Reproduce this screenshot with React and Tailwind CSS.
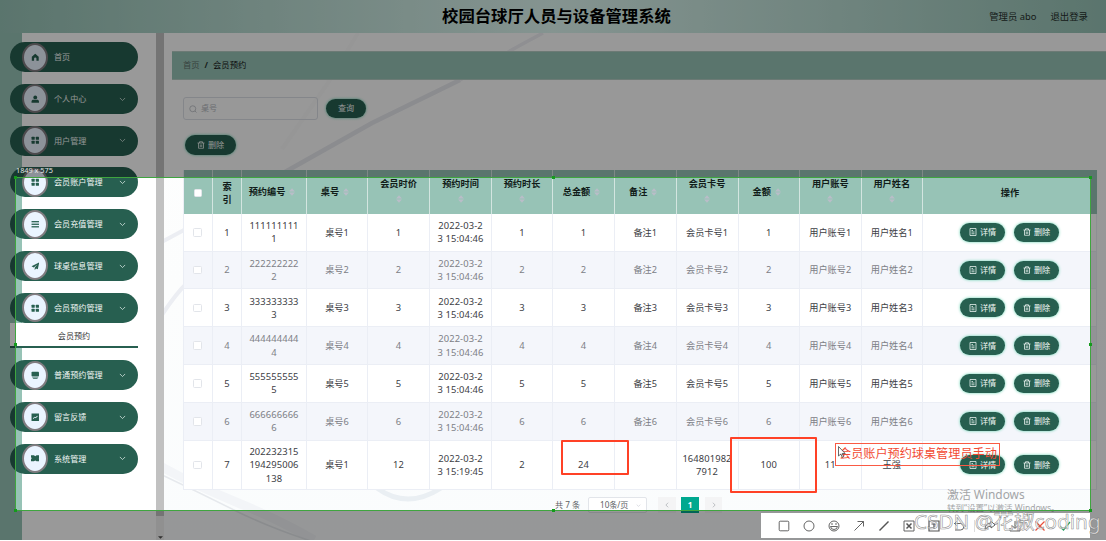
import React from "react";

const COLS =
  "grid grid-cols-[29px_29px_65px_61px_62px_62px_61px_62px_61.5px_62px_61.5px_61.5px_61.5px_1fr]";

const GLYPHS = {
  home: <path d="M8 1.5 1.5 7v7.5h4.3v-4a2.2 2.2 0 0 1 4.4 0v4h4.3V7z" />,
  user: (
    <>
      <circle cx="8" cy="4.6" r="3.6" />
      <path d="M1 14.5V12c0-2 1.5-3 3.5-3h7c2 0 3.5 1 3.5 3v2.5z" />
    </>
  ),
  grid: (
    <>
      <rect x="1" y="1.5" width="6" height="5.5" rx="1" />
      <rect x="9" y="1.5" width="6" height="5.5" rx="1" />
      <rect x="1" y="9" width="6" height="5.5" rx="1" />
      <rect x="9" y="9" width="6" height="5.5" rx="1" />
    </>
  ),
  list: (
    <>
      <rect x="1" y="2" width="14" height="2.4" />
      <rect x="1" y="6.8" width="14" height="2.4" />
      <rect x="1" y="11.6" width="14" height="2.4" />
    </>
  ),
  send: <path d="M15.5.8 1 8.2l4.2 2L12 4.8 7 11v4.2l2.4-3 3.4 1.6z" />,
  board: (
    <>
      <rect x="1" y="1.5" width="14" height="9" rx="1.5" />
      <path d="M2 12h12l-2.5 2.8h-7z" />
    </>
  ),
  chart: (
    <path
      fillRule="evenodd"
      d="M1 1h14v14H1zM3.5 10l1 1.2 2.8-2.6 1.5 1.2L12.8 6l-1-1-3.2 3-1.4-1.1z"
    />
  ),
  ticket: (
    <path d="M0 2.5h5.500L8 4l2.500-1.500H16v3.700a2 2 0 0 0 0 3.600v3.700h-5.500L8 12l-2.500 1.500H0V9.800a2 2 0 0 0 0-3.600z" />
  ),
};

const MENU_TOP = [
  ["home", "首页"],
  ["user", "个人中心"],
  ["grid", "用户管理"],
  ["grid", "会员账户管理"],
  ["list", "会员充值管理"],
  ["send", "球桌信息管理"],
  ["grid", "会员预约管理"],
];
const MENU_BOTTOM = [
  ["board", "普通预约管理"],
  ["chart", "留言反馈"],
  ["ticket", "系统管理"],
];

const HEADERS = [
  "预约编号", "桌号", "会员时价", "预约时间", "预约时长", "总金额",
  "备注", "会员卡号", "金额", "用户账号", "用户姓名",
];
const WRAPPED = ["会员时价", "预约时间", "预约时长", "会员卡号", "用户账号", "用户姓名"];

const ROWS = [1, 2, 3, 4, 5, 6].map((n) => [
  `${n}`,
  [String(n).repeat(9), `${n}`],
  `桌号${n}`,
  `${n}`,
  ["2022-03-2", "3 15:04:46"],
  `${n}`,
  `${n}`,
  `备注${n}`,
  `会员卡号${n}`,
  `${n}`,
  `用户账号${n}`,
  `用户姓名${n}`,
]);
ROWS.push([
  "7",
  ["202232315", "194295006", "138"],
  "桌号1",
  "12",
  ["2022-03-2", "3 15:19:45"],
  "2",
  "24",
  "",
  ["164801982", "7912"],
  "100",
  "11",
  "王强",
]);

function Chevron({ className, d = "M1 1l3 3 3-3", box = "0 0 8 5" }) {
  return (
    <svg className={className} viewBox={box} fill="none" stroke="currentColor" strokeWidth="0.9">
      <path d={d} />
    </svg>
  );
}

function MenuItem({ icon, label }) {
  return (
    <div className="flex h-[30px] w-[128px] shrink-0 items-center rounded-full bg-[#275f50] pl-[12px] pr-[12px] text-white">
      <span className="flex h-[29px] w-[26px] items-center justify-center rounded-[50%] border-2 border-[#807c80] bg-[#eaf4ff]">
        <svg className="h-[8.500px] w-[8.500px]" viewBox="0 0 16 16" fill="#275f50">
          {GLYPHS[icon]}
        </svg>
      </span>
      <span className="ml-[6px] flex-1 whitespace-nowrap text-[8.1px] leading-none text-[#f2f8f6]">{label}</span>
      {icon !== "home" && <Chevron className="h-[4.500px] w-[7px] text-[#d5e5e0]" />}
    </div>
  );
}

function Trash() {
  return (
    <svg className="h-[8px] w-[8px]" viewBox="0 0 16 16" fill="none" stroke="currentColor" strokeWidth="1.5">
      <path d="M1 4h14M5 4V1.500h6V4M3 4v10.500h10V4M6.500 7v5M9.500 7v5" />
    </svg>
  );
}

function Doc() {
  return (
    <svg className="h-[8px] w-[8px]" viewBox="0 0 16 16" fill="none" stroke="currentColor" strokeWidth="1.5">
      <path d="M2 1h12v14H2zM5 5h3M5 8h6M5 11.500h6" />
    </svg>
  );
}

function Pill({ className, children }) {
  return (
    <span
      className={`flex items-center justify-center gap-[3px] whitespace-nowrap rounded-full bg-[#275f50] text-[8.1px] leading-none text-[#f2f8f6] shadow-[0_0_3px_#5fcfac] ${className}`}
    >
      {children}
    </span>
  );
}

function Sort() {
  return (
    <svg className="h-[8px] w-[6px] shrink-0" viewBox="0 0 6 8" fill="#b9bdc8">
      <path d="M3 0.300 5.900 3.500H0.100zM3 7.700 0.100 4.500h5.800z" />
    </svg>
  );
}

function Check({ className = "" }) {
  return <span className={`block h-[8.500px] w-[8.500px] rounded-[1.5px] border border-[#e2e5ea] bg-white ${className}`} />;
}

function Marble() {
  return (
    <svg className="absolute inset-0 h-full w-full" viewBox="164 33 942 507" preserveAspectRatio="none" fill="none">
      <defs>
        <linearGradient id="wash" x1="0" y1="0" x2="0" y2="1">
          <stop offset="0" stopColor="#fefefe" />
          <stop offset="0.500" stopColor="#fcfdfd" />
          <stop offset="1" stopColor="#fafcfd" />
        </linearGradient>
      </defs>
      <rect x="164" y="33" width="942" height="507" fill="url(#wash)" />
      <path d="M543 33Q505 53 460 80" stroke="#eeeff3" strokeWidth="3.500" />
      <path d="M460 80L372 123 285 172" stroke="#e8e9ee" strokeWidth="4.500" />
      <path d="M358 33l-30 50-46 66" stroke="#fafafb" strokeWidth="4" />
      <path d="M160 243l24-13M160 318q14-22 26-34" stroke="#eceef3" strokeWidth="4" />
      <path d="M160 466q32 18 76 36t78 38" stroke="#f3f5f8" strokeWidth="9" />
      <path d="M160 474q38 18 74 36t80 32" stroke="#e6e9ed" strokeWidth="1.500" />
      <path d="M377 488q30 22 64 0" stroke="#eaeff3" strokeWidth="5" />
    </svg>
  );
}

function Cell({ value }) {
  const lines = Array.isArray(value) ? value : [value];
  const numeric = /^[\d\s:-]*$/.test(lines[0]);
  return (
    <div
      className={`flex flex-col items-center justify-center whitespace-nowrap border-r border-[#ebeef5] leading-[13.3px] ${
        numeric ? "text-[9.4px] tracking-[0.100px]" : "text-[9.2px]"
      }`}
    >
      {lines.map((l, i) => (
        <span key={i}>{l}</span>
      ))}
    </div>
  );
}

function Table() {
  return (
    <div className="w-[914px] border-l border-[#ebeef5]">
      <div className={`${COLS} h-[43.600px] bg-[#97c3b6] text-[9.2px] font-bold leading-[13.300px] text-[#111c19]`}>
        <div className="flex items-center justify-center border-r border-[#d3e5e0] pt-[2px]">
          <Check />
        </div>
        <div className="flex flex-col items-center justify-center border-r border-[#d3e5e0] pt-[2px]">
          <span>索</span>
          <span>引</span>
        </div>
        {HEADERS.map((h) => (
          <div
            key={h}
            className={`flex items-center justify-center whitespace-nowrap border-r border-[#d3e5e0] ${
              WRAPPED.includes(h) ? "flex-col gap-[4px] pb-[4px]" : "gap-[4px] pb-[1px] pr-[4px]"
            }`}
          >
            <span>{h}</span>
            <Sort />
          </div>
        ))}
        <div className="flex items-center justify-center pt-[2px]">操作</div>
      </div>
      {ROWS.map((row, r) => (
        <div
          key={r}
          className={`${COLS} border-b border-[#ebeef5] ${r === 6 ? "h-[49.500px]" : "h-[37.800px]"} ${
            r % 2 ? "bg-[#f4f6fb] text-[#7d8086]" : "bg-white text-[#3d4045]"
          }`}
        >
          <div className="flex items-center justify-center border-r border-[#ebeef5] pr-[1px]">
            <Check />
          </div>
          {row.map((v, i) => (
            <Cell key={i} value={v} />
          ))}
          <div className="flex items-center justify-center gap-[9px] border-r border-[#ebeef5]">
            <Pill className="h-[19px] w-[45px]">
              <Doc />
              详情
            </Pill>
            <Pill className="h-[19px] w-[45px]">
              <Trash />
              删除
            </Pill>
          </div>
        </div>
      ))}
    </div>
  );
}

function Selection() {
  const dots = [
    "left-[-2px] top-[-2px]",
    "left-[536px] top-[-2px]",
    "right-[-2px] top-[-2px]",
    "left-[-2px] top-[165px]",
    "right-[-2px] top-[165px]",
    "left-[-2px] bottom-[-2px]",
    "left-[536px] bottom-[-2px]",
    "right-[-2px] bottom-[-2px]",
  ];
  return (
    <div className="absolute left-[15px] top-[177px] h-[334px] w-[1076px] border border-[#3fa53f] shadow-[0_0_0_1200px_rgba(0,0,0,0.4)]">
      {dots.map((d) => (
        <i key={d} className={`absolute h-[3px] w-[3px] bg-[#149a1c] ${d}`} />
      ))}
    </div>
  );
}

function Toolbar() {
  const props = { className: "h-[12px] w-[12px]", viewBox: "0 0 12 12", fill: "none", stroke: "#555", strokeWidth: 0.9 };
  return (
    <div className="absolute left-[761px] top-[513px] flex h-[25px] w-[329px] items-center gap-[13px] bg-white pl-[16.500px]">
      <svg {...props}><rect x="1.200" y="1.200" width="9.600" height="9.600" rx="1" /></svg>
      <svg {...props}><circle cx="6" cy="6" r="5" /></svg>
      <svg {...props}><circle cx="6" cy="6" r="5" /><path d="M2.500 6.500h7q-.5 3-3.500 3t-3.500-3zM4 3v2M8 3v2" /></svg>
      <svg {...props}><path d="M1.500 10.500l9-9M4.500 1.500h6v5" /></svg>
      <svg {...props}><path d="M1.500 10.500l9-9" strokeWidth="1.400" /></svg>
      <svg {...props}><path d="M1 1h10v10H1z" /><path d="M3.500 3.500l5 5M8.500 3.500l-5 5" strokeWidth="1.500" /></svg>
      <svg {...props}><path d="M1 1h10v10H1zM3.500 4h5M6 4v5" strokeWidth="1.200" /></svg>
      <svg {...props}><path d="M4 1L1.500 3.500 4 6M1.500 3.500h6a3.200 3.200 0 0 1 0 6.500H2" /></svg>
      <span className="-mx-[4px] h-[12px] w-px bg-[#ddd]" />
      <svg {...props}><path d="M1 10q0-7 6-7V1l4 4-4 3V6Q3 6 1 10z" /></svg>
      <svg {...props}><path d="M6 1v7M3 5.500l3 3 3-3M1 8v3h10V8" /></svg>
      <svg {...props} stroke="#e8503c"><path d="M1.500 1.500l9 9M10.500 1.500l-9 9" strokeWidth="1.200" /></svg>
      <svg {...props} stroke="#1fa060"><path d="M1 6.500l3.500 3.500L11 2" strokeWidth="1.200" /></svg>
    </div>
  );
}

export default function App() {
  return (
    <div className="relative h-[541px] w-[1106px] overflow-hidden bg-white font-['Noto_Sans','Noto_Sans_CJK_SC',sans-serif]">
      <div className="flex h-[540px] w-full flex-col">
        <header className="grid h-[33px] shrink-0 grid-cols-[1fr_auto_1fr] items-center bg-[linear-gradient(90deg,#97c3b6_0%,#def7f1_50%,#97c3b6_100%)]">
          <span />
          <h1 className="pl-[7px] text-[16.350px] font-bold leading-none text-black">校园台球厅人员与设备管理系统</h1>
          <div className="flex justify-end gap-[14px] pr-[18px] text-[9.4px] leading-none text-[#26302d]">
            <span>管理员 abo</span>
            <span>退出登录</span>
          </div>
        </header>

        <div className="flex min-h-0 flex-1">
          <aside className="flex w-[164px] shrink-0 bg-[linear-gradient(90deg,#97c3b6_22px,#fff_22px)]">
            <nav className="flex w-[156px] flex-col pl-[10px] pt-[9px]">
              <div className="flex flex-col gap-[11.800px]">
                {MENU_TOP.map(([icon, label]) => (
                  <MenuItem key={label} icon={icon} label={label} />
                ))}
              </div>
              <div className="mb-[12px] flex h-[25.300px] w-[128px] shrink-0 items-center justify-center border-b-2 border-[#275f50] bg-white pt-[3px] text-[8.1px] leading-none text-[#333]">
                会员预约
              </div>
              <div className="flex flex-col gap-[11.800px]">
                {MENU_BOTTOM.map(([icon, label]) => (
                  <MenuItem key={label} icon={icon} label={label} />
                ))}
              </div>
            </nav>
            <div className="flex w-[8px] flex-col justify-between bg-[#f1f1f1] pb-[1.500px]">
              <div className="h-[483px] bg-[#c1c1c1]" />
              <svg className="mx-auto h-[3px] w-[5px]" viewBox="0 0 6 3" fill="#505050"><path d="M0 0h6L3 3z" /></svg>
            </div>
          </aside>

          <main className="relative flex-1 overflow-hidden">
            <Marble />
            <div className="relative pl-[8px] pt-[17.500px]">
              <div className="flex h-[29px] items-center gap-[5px] border-y border-[#b5cbc4] bg-[#97c3b6] pl-[11px] text-[8.3px] leading-none">
                <span className="text-[#5d6f6a]">首页</span>
                <span className="font-bold text-[#26302d]">/</span>
                <span className="text-[#111]">会员预约</span>
              </div>
              <div className="mt-[17.500px] flex h-[23px] items-center gap-[8px] pl-[11px]">
                <div className="flex h-[23px] w-[135px] items-center gap-[4px] rounded-[3px] border border-[#dcdfe6] pl-[5px] text-[8.1px] leading-none text-[#b4b7bd]">
                  <svg className="h-[8px] w-[8px]" viewBox="0 0 16 16" fill="none" stroke="#b4b7bd" strokeWidth="1.500"><circle cx="7.500" cy="7.500" r="6" /><path d="M12 12l3 3" /></svg>
                  桌号
                </div>
                <Pill className="h-[19px] w-[40px]">查询</Pill>
              </div>
              <div className="mt-[15px] flex pl-[13px]">
                <Pill className="h-[20px] w-[51px]">
                  <Trash />
                  删除
                </Pill>
              </div>
              <div className="mt-[15.300px] pl-[11px]">
                <Table />
              </div>
              <div className="mt-[7px] flex h-[16px] items-center pl-[383px] text-[8.100px] leading-none text-[#606266]">
                <span className="w-[33px]">共 7 条</span>
                <span className="flex h-[16px] w-[59px] items-center justify-between rounded-[2px] border border-[#e2e5ea] bg-white pl-[11px] pr-[5px]">
                  10条/页
                  <Chevron className="h-[3px] w-[5px] text-[#c0c4cc]" />
                </span>
                <span className="ml-[11px] flex h-[16px] w-[18px] items-center justify-center bg-[#f4f4f5] text-[#a4a7ad]">
                  <Chevron className="h-[6px] w-[4px]" box="0 0 5 8" d="M4 1L1 4l3 3" />
                </span>
                <span className="ml-[5px] flex h-[16px] w-[18px] items-center justify-center bg-[#00a88f] font-bold text-white">1</span>
                <span className="ml-[6px] flex h-[16px] w-[17px] items-center justify-center bg-[#f4f4f5] text-[#a4a7ad]">
                  <Chevron className="h-[6px] w-[4px]" box="0 0 5 8" d="M1 1l3 3-3 3" />
                </span>
              </div>
            </div>
          </main>
        </div>
      </div>

      <div className="absolute left-[947px] top-[487px] whitespace-nowrap text-[#a3a5a7]">
        <div className="text-[11.900px] leading-[14px]">激活 Windows</div>
        <div className="text-[8.500px] leading-[13px]">转到“设置”以激活 Windows。</div>
      </div>

      <div className="absolute inset-0 h-[540px] overflow-hidden">
        <Selection />
      </div>
      <div className="absolute left-[16px] top-[166px] text-[7.300px] leading-[9px] text-[#e4e4e4]">1849 x 575</div>

      <div className="absolute left-[561px] top-[440px] h-[35px] w-[68px] rounded-[1px] border-2 border-[#ff4126]" />
      <div className="absolute left-[730px] top-[437px] h-[56px] w-[87px] rounded-[1px] border-2 border-[#ff4126]" />
      <div className="absolute left-[835px] top-[443px] flex h-[23px] w-[165px] items-center whitespace-nowrap border border-[#fa5a44] pl-[3px] text-[12.150px] leading-none text-[#f24a32]">
        会员账户预约球桌管理员手动
      </div>
      <svg className="absolute left-[838px] top-[446px] h-[12px] w-[8px]" viewBox="0 0 8 12" fill="#fff" stroke="#444" strokeWidth="0.800">
        <path d="M.5.5v9.500L2.800 8l1.500 3.300 1.400-.6L4.200 7.500h3z" />
      </svg>

      <Toolbar />
      <div className="absolute left-[914px] top-[510px] whitespace-nowrap text-[20.700px] leading-[22px] text-white/70 [-webkit-text-stroke:0.600px_rgba(110,110,110,0.75)]">
        CSDN @花椒coding
      </div>
    </div>
  );
}
